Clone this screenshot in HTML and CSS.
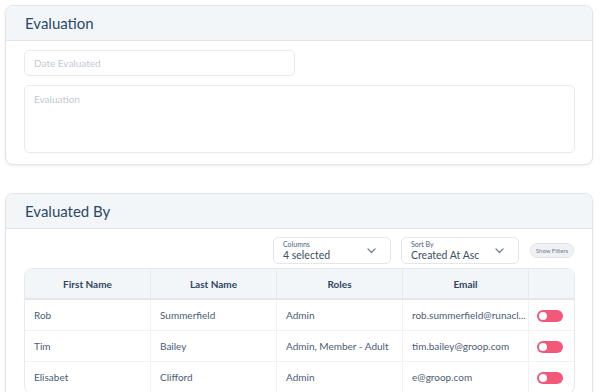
FILE: index.html
```html
<!DOCTYPE html>
<html lang="en">
<head>
    <meta charset="UTF-8">
    <meta name="viewport" content="width=device-width, initial-scale=1.0">
    <title>Evaluation</title>
    <link rel="stylesheet" href="styles.css">
</head>
<body>

    <div class="card">
        <div class="card-header">Evaluation</div>
        <div class="card-body first-body">
            <input type="text" class="field date-field" placeholder="Date Evaluated">
            <textarea class="field note-field" placeholder="Evaluation"></textarea>
        </div>
    </div>

    <div class="card second">
        <div class="card-header">Evaluated By</div>
        <div class="card-body">
            <div class="toolbar">
                <div class="select">
                    <div class="select-text">
                        <span class="select-label">Columns</span>
                        <span class="select-value">4 selected</span>
                    </div>
                    <svg class="chevron" width="9" height="6" viewBox="0 0 9 6"><path d="M1 1l3.5 3.5L8 1" fill="none" stroke="#6b7f96" stroke-width="1.2" stroke-linecap="round" stroke-linejoin="round"/></svg>
                </div>
                <div class="select">
                    <div class="select-text">
                        <span class="select-label">Sort By</span>
                        <span class="select-value">Created At Asc</span>
                    </div>
                    <svg class="chevron" width="9" height="6" viewBox="0 0 9 6"><path d="M1 1l3.5 3.5L8 1" fill="none" stroke="#6b7f96" stroke-width="1.2" stroke-linecap="round" stroke-linejoin="round"/></svg>
                </div>
                <button class="pill">Show Filters</button>
            </div>

            <table class="grid">
                <colgroup>
                    <col class="col-wide">
                    <col class="col-wide">
                    <col class="col-wide">
                    <col class="col-wide">
                    <col>
                </colgroup>
                <thead>
                    <tr>
                        <th>First Name</th>
                        <th>Last Name</th>
                        <th>Roles</th>
                        <th>Email</th>
                        <th></th>
                    </tr>
                </thead>
                <tbody>
                    <tr>
                        <td>Rob</td>
                        <td>Summerfield</td>
                        <td>Admin</td>
                        <td>rob.summerfield@runacl...</td>
                        <td><span class="toggle"></span></td>
                    </tr>
                    <tr>
                        <td>Tim</td>
                        <td>Bailey</td>
                        <td>Admin, Member - Adult</td>
                        <td>tim.bailey@groop.com</td>
                        <td><span class="toggle"></span></td>
                    </tr>
                    <tr>
                        <td>Elisabet</td>
                        <td>Clifford</td>
                        <td>Admin</td>
                        <td>e@groop.com</td>
                        <td><span class="toggle"></span></td>
                    </tr>
                </tbody>
            </table>
        </div>
    </div>

</body>
</html>
```

FILE: styles.css
```css
body, html {
    margin: 0;
    padding: 0;
    font-family: Lato, "Open Sans", sans-serif;
    background-color: white;
    overflow: hidden;
}

body {
    padding: 5px 7px 0 5px;
}

.card {
    border: 1px solid #e1e5ea;
    border-radius: 8px;
    background-color: white;
    box-shadow: 0 1px 3px rgba(0, 0, 0, 0.08);
    overflow: hidden;
}

.second {
    margin-top: 28px;
}

.card-header {
    height: 34px;
    line-height: 34px;
    padding-left: 19px;
    background-color: #f3f6f9;
    border-bottom: 1px solid #e1e5ea;
    font-size: 15px;
    color: #2b4867;
}

.card-body {
    padding: 9px 18px 10px 18px;
}

.first-body {
    padding-bottom: 11px;
}

.field {
    display: block;
    box-sizing: border-box;
    border: 1px solid #e7eaee;
    border-radius: 5px;
    font-family: Lato, sans-serif;
    font-size: 10px;
    color: #445;
    padding: 0 9px;
    outline: none;
    background: white;
}

.field::placeholder {
    color: #c3c9d1;
}

.date-field {
    width: 271px;
    height: 26px;
}

.note-field {
    width: 551px;
    height: 68px;
    margin-top: 9px;
    padding-top: 7px;
    resize: none;
}

.toolbar {
    display: flex;
    justify-content: flex-end;
    align-items: center;
    gap: 10px;
    margin-top: -1px;
}

.select {
    display: flex;
    align-items: center;
    justify-content: space-between;
    box-sizing: border-box;
    width: 118px;
    height: 27px;
    border: 1px solid #e3e7eb;
    border-radius: 5px;
    padding: 0 14px 0 9px;
}

.select-text {
    display: flex;
    flex-direction: column;
}

.select-label {
    font-size: 7px;
    color: #4e6279;
    line-height: 9px;
}

.select-value {
    font-size: 10.5px;
    color: #3c4f64;
    line-height: 12px;
}

.pill {
    box-sizing: border-box;
    width: 44px;
    margin-left: 1px;
    font-family: Lato, sans-serif;
    font-size: 6px;
    color: #6f7d8c;
    background-color: #eff1f4;
    border: 1px solid #dfe3e8;
    border-radius: 8px;
    padding: 0;
    height: 15px;
    cursor: pointer;
}

.grid {
    margin-top: 4px;
    width: 551px;
    border-collapse: separate;
    border-spacing: 0;
    border: 1px solid #e6e9ed;
    border-radius: 8px;
    font-size: 10px;
    table-layout: fixed;
}

.col-wide {
    width: 126px;
}

.grid th {
    height: 29px;
    padding: 0;
    background-color: #f3f6f9;
    border-bottom: 2px solid #e3e7ec;
    border-right: 1px solid #e6e9ed;
    color: #2f4560;
    font-weight: bold;
}

.grid th:first-child {
    border-top-left-radius: 8px;
}

.grid th:last-child {
    border-top-right-radius: 8px;
    border-right: none;
}

.grid td {
    height: 30px;
    padding: 0 9px;
    color: #4a5d74;
    border-bottom: 1px solid #f0f2f5;
    border-right: 1px solid #f0f2f5;
    white-space: nowrap;
    overflow: hidden;
}

.grid td:last-child {
    border-right: none;
    padding: 0 3px 0 0;
    text-align: center;
}

.toggle {
    display: inline-block;
    position: relative;
    width: 26px;
    height: 12px;
    border-radius: 6px;
    background-color: #f2587a;
    vertical-align: middle;
}

.toggle::after {
    content: "";
    position: absolute;
    left: 2px;
    top: 2px;
    width: 8px;
    height: 8px;
    border-radius: 50%;
    background-color: white;
}
```
